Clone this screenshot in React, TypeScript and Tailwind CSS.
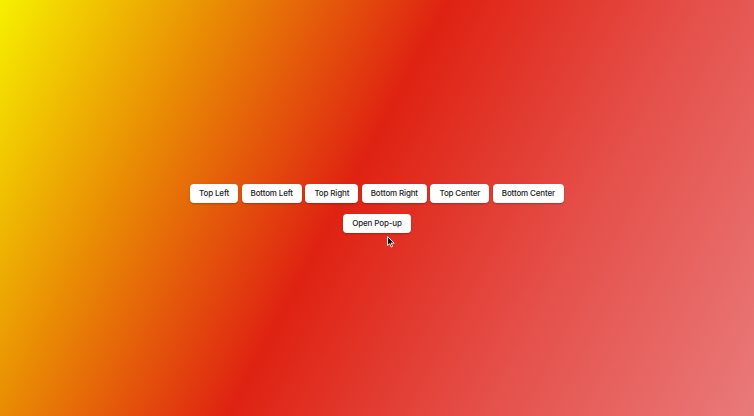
const positions = [
  "Top Left",
  "Bottom Left",
  "Top Right",
  "Bottom Right",
  "Top Center",
  "Bottom Center",
];

const Cursor = () => (
  <svg
    className="absolute left-[387px] top-[236px]"
    width="8"
    height="12"
    viewBox="0 0 8 12"
  >
    <path
      d="M0.5 0.5 L0.5 9.5 L2.7 7.6 L4.2 11 L5.6 10.4 L4.2 7.1 L7.2 7.1 Z"
      fill="#111"
      stroke="#fff"
      strokeWidth="0.9"
      strokeLinejoin="round"
    />
  </svg>
);

export default function App() {
  return (
    <div className="relative h-[416px] w-[754px] overflow-hidden bg-[linear-gradient(118deg,#f6f000_0%,#e98a04_23%,#df2212_46%,#e5504a_72%,#e97a7a_100%)] font-['Inter',sans-serif]">
      <div className="flex h-full flex-col items-center justify-center gap-[11px]">
        <div className="flex gap-[3.5px]">
          {positions.map((p) => (
            <button
              key={p}
              className="h-[19px] rounded-[4px] bg-white px-[9px] text-[8px] font-medium tracking-[-0.15px] text-[#222] shadow-[0_1px_2px_rgba(0,0,0,0.25)]"
            >
              {p}
            </button>
          ))}
        </div>
        <button className="h-[19px] rounded-[4px] bg-white px-[9px] text-[8px] font-medium tracking-[-0.15px] text-[#222] shadow-[0_1px_2px_rgba(0,0,0,0.25)]">
          Open Pop-up
        </button>
      </div>
      <Cursor />
    </div>
  );
}
